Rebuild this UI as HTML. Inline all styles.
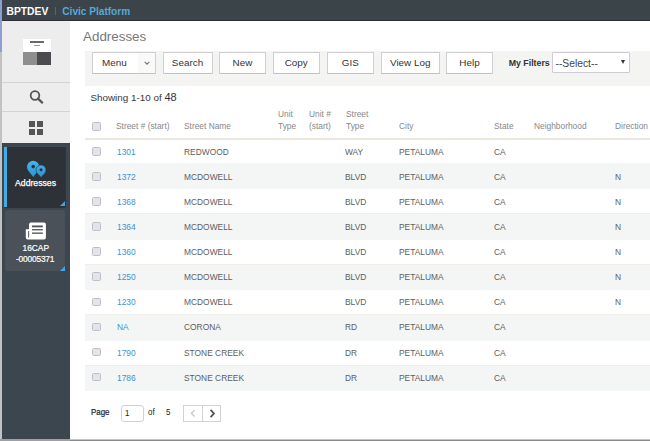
<!DOCTYPE html>
<html><head><meta charset="utf-8">
<style>
*{margin:0;padding:0;box-sizing:border-box}
html,body{width:650px;height:441px;overflow:hidden;background:#fff;font-family:"Liberation Sans",sans-serif;position:relative}
.a{position:absolute;white-space:nowrap}
#lstrip1{left:0;top:0;width:2px;height:52px;background:#8e9dd2}
#lstrip2{left:0;top:52px;width:2px;height:389px;background:#c2c2c2}
#hdr{left:2px;top:0;width:648px;height:21px;background:#3b4549;border-bottom:1px solid #283036}
#hdr .t{font-size:10.3px;font-weight:bold;line-height:10px;top:7px}
#side1{left:2px;top:21px;width:68px;height:122px;background:#ededed}
#side2{left:2px;top:143px;width:68px;height:298px;background:#3b464f}
.sep{left:2px;width:68px;height:1px;background:#d3d3d3}
.btn{top:52px;height:22px;border:1px solid #d0cdd3;border-bottom-color:#c4c0c8;background:#fff;font-size:9.9px;color:#333;text-align:center;line-height:20px}
#toolbar{left:85px;top:51px;width:565px;height:35px;background:#f4f4f3}
.hd{font-size:9px;color:#888;line-height:12px;transform:scaleX(.93);transform-origin:0 0}
.cell{font-size:9.6px;color:#5e5e5e;line-height:10px;transform:scaleX(.875);transform-origin:0 0}
.lnk{color:#3d93d0}
.pg{font-size:9px;color:#222;line-height:10px;transform:scaleX(.88);transform-origin:0 0}
.stripe{left:85px;width:565px;height:25px;background:#f4f5f5}
.cb{width:8.5px;height:8.5px;border:1px solid #c2bec8;background:#e4e3e9;border-radius:1.5px}
</style></head><body>
<div class="a" id="lstrip1"></div>
<div class="a" id="lstrip2"></div>
<div class="a" id="hdr">
  <div class="a t" style="left:4.5px;color:#fff">BPTDEV</div>
  <div class="a" style="left:53px;top:7px;width:1px;height:8px;background:#5b646c"></div>
  <div class="a t" style="left:60.3px;color:#5aa7d6;font-size:10.1px">Civic Platform</div>
</div>
<div class="a" id="side1"></div>
<div class="a sep" style="top:82px"></div>
<div class="a sep" style="top:111px"></div>
<div class="a" id="side2"></div>
<!-- logo icon -->
<div class="a" style="left:23.2px;top:38.5px;width:27.4px;height:13.3px;background:#fff"></div>
<div class="a" style="left:29.6px;top:41px;width:14.3px;height:1.7px;background:#6a6a6a"></div>
<div class="a" style="left:33.5px;top:44.9px;width:6.9px;height:1px;background:#9a9a9a"></div>
<div class="a" style="left:23.2px;top:51.8px;width:13.8px;height:13.4px;background:#8e8e8e"></div>
<div class="a" style="left:37px;top:51.8px;width:13.6px;height:13.4px;background:#4c4b50"></div>
<!-- search icon -->
<svg class="a" style="left:27px;top:88.3px" width="18" height="18" viewBox="0 0 18 18"><circle cx="8" cy="7.5" r="4.3" fill="none" stroke="#555" stroke-width="1.8"/><line x1="11" y1="10.6" x2="15.2" y2="14.6" stroke="#555" stroke-width="2.2" stroke-linecap="round"/></svg>
<!-- grid icon -->
<div class="a" style="left:29.3px;top:121px;width:6px;height:6px;background:#555"></div>
<div class="a" style="left:37.3px;top:121px;width:6px;height:6px;background:#555"></div>
<div class="a" style="left:29.3px;top:128.8px;width:6px;height:6px;background:#555"></div>
<div class="a" style="left:37.3px;top:128.8px;width:6px;height:6px;background:#555"></div>
<!-- addresses tile -->
<div class="a" style="left:3.6px;top:145.8px;width:62px;height:62px;background:#2c3237;border-radius:2px;border-top:1px solid #434b52"></div>
<div class="a" style="left:4.2px;top:146.9px;width:2.7px;height:60px;background:#45aae6"></div>
<svg class="a" style="left:0;top:0" width="70" height="200" viewBox="0 0 70 200"><defs><linearGradient id="pg1" x1="0" y1="160" x2="0" y2="177" gradientUnits="userSpaceOnUse"><stop offset="0" stop-color="#4db5ec"/><stop offset="1" stop-color="#2b93d4"/></linearGradient></defs><path d="M33.2 177L28.33 170.84A6.2 6.2 0 1 1 38.07 170.84Z" fill="url(#pg1)"/><circle cx="33.2" cy="166.6" r="1.8" fill="#2c3237"/><path d="M41 177.4L37.31 173.38A5 5 0 1 1 44.69 173.38Z" fill="url(#pg1)" stroke="#2c3237" stroke-width="0.6"/><circle cx="41" cy="169.8" r="1.5" fill="#2c3237"/></svg>
<div class="a" style="left:15px;top:178.7px;font-size:8.7px;color:#fff;line-height:9px;-webkit-text-stroke:0.25px #fff">Addresses</div>
<div class="a" style="left:59.5px;top:201px;width:0;height:0;border-left:5px solid transparent;border-bottom:5px solid #3ea6e3"></div>
<!-- 16CAP tile -->
<div class="a" style="left:5px;top:210px;width:60px;height:61px;background:#4b5158;border-radius:2px"></div>
<svg class="a" style="left:0;top:200px" width="70" height="60" viewBox="0 200 70 60"><path d="M31 222.4H44A1.9 1.9 0 0 1 45.9 224.3V237.5A1.9 1.9 0 0 1 44 239.4H27.7A1.9 1.9 0 0 1 25.8 237.5V229.2H29V224.4A2 2 0 0 1 31 222.4Z" fill="#fff"/><rect x="32" y="225.5" width="10.8" height="1.8" fill="#4b5158"/><rect x="32" y="229.1" width="10.8" height="1.3" fill="#4b5158"/><rect x="32" y="232.5" width="10.8" height="1.3" fill="#4b5158"/><rect x="28.2" y="231" width="0.9" height="6.5" fill="#4b5158"/></svg>
<div class="a" style="left:22.5px;top:244px;font-size:8.4px;color:#fff;line-height:9px;-webkit-text-stroke:0.2px #fff">16CAP</div>
<div class="a" style="left:16px;top:255.3px;font-size:8.4px;color:#fff;line-height:9px;letter-spacing:-0.2px;-webkit-text-stroke:0.2px #fff">-00005371</div>
<div class="a" style="left:59.5px;top:265.5px;width:0;height:0;border-left:5px solid transparent;border-bottom:5px solid #3ea6e3"></div>

<!-- content -->
<div class="a" style="left:83px;top:29px;font-size:13.4px;color:#777;line-height:15px">Addresses</div>
<div class="a" id="toolbar"></div>
<div class="a btn" style="left:92px;width:64px;text-align:left;padding-left:9px"><div class="a" style="left:44.5px;top:0;width:17.5px;height:20px;background:#f9f9f9"></div><span class="a" style="left:9px;top:0">Menu</span><svg class="a" style="left:50px;top:7px" width="8" height="6" viewBox="0 0 8 6"><path d="M1.7 1.8L4 4.1L6.3 1.8" fill="none" stroke="#777" stroke-width="1.2"/></svg></div>
<div class="a btn" style="left:162.5px;width:50px">Search</div>
<div class="a btn" style="left:219px;width:47px">New</div>
<div class="a btn" style="left:273px;width:46.5px">Copy</div>
<div class="a btn" style="left:327px;width:46.5px">GIS</div>
<div class="a btn" style="left:381px;width:58.5px">View Log</div>
<div class="a btn" style="left:446px;width:47px">Help</div>
<div class="a" style="left:508.7px;top:57.9px;font-size:8.8px;font-weight:bold;color:#333;line-height:10px">My Filters</div>
<div class="a" style="left:552px;top:52px;width:78px;height:21px;border:1px solid #cfcad3;background:#fff;border-radius:1px"></div>
<div class="a" style="left:555.5px;top:58px;font-size:10.3px;color:#444;line-height:11px">--Select--</div>
<div class="a" style="left:621px;top:60px;width:0;height:0;border-left:2.5px solid transparent;border-right:2.5px solid transparent;border-top:4px solid #333"></div>

<div class="a" style="left:90.5px;top:92px;font-size:9.85px;color:#383838;line-height:11px">Showing 1-10 of <span style="font-size:11px;color:#333">48</span></div>

<!-- header -->
<div class="a cb" style="left:92px;top:122px"></div>
<div class="a hd" style="left:116px;top:120px">Street # (start)</div>
<div class="a hd" style="left:183.5px;top:120px">Street Name</div>
<div class="a hd" style="left:278px;top:108px">Unit<br>Type</div>
<div class="a hd" style="left:309px;top:108px">Unit #<br>(start)</div>
<div class="a hd" style="left:345.5px;top:108px">Street<br>Type</div>
<div class="a hd" style="left:399px;top:120px">City</div>
<div class="a hd" style="left:493.5px;top:120px">State</div>
<div class="a hd" style="left:534px;top:120px">Neighborhood</div>
<div class="a hd" style="left:615px;top:120px">Direction</div>
<div class="a" style="left:85px;top:138px;width:565px;height:1.6px;background:#e9e7de"></div>

<div id="rows"><div class="a cb" style="left:92px;top:147.00px"></div>
<div class="a cell lnk" style="left:116.5px;top:146.80px">1301</div>
<div class="a cell" style="left:183.5px;top:146.80px">REDWOOD</div>
<div class="a cell" style="left:345px;top:146.80px">WAY</div>
<div class="a cell" style="left:399px;top:146.80px">PETALUMA</div>
<div class="a cell" style="left:493.5px;top:146.80px">CA</div>
<div class="a stripe" style="top:162.80px;height:26.7px"></div>
<div class="a cb" style="left:92px;top:172.00px"></div>
<div class="a cell lnk" style="left:116.5px;top:171.80px">1372</div>
<div class="a cell" style="left:183.5px;top:171.80px">MCDOWELL</div>
<div class="a cell" style="left:345px;top:171.80px">BLVD</div>
<div class="a cell" style="left:399px;top:171.80px">PETALUMA</div>
<div class="a cell" style="left:493.5px;top:171.80px">CA</div>
<div class="a cell" style="left:615px;top:171.80px">N</div>
<div class="a cb" style="left:92px;top:197.20px"></div>
<div class="a cell lnk" style="left:116.5px;top:197.00px">1368</div>
<div class="a cell" style="left:183.5px;top:197.00px">MCDOWELL</div>
<div class="a cell" style="left:345px;top:197.00px">BLVD</div>
<div class="a cell" style="left:399px;top:197.00px">PETALUMA</div>
<div class="a cell" style="left:493.5px;top:197.00px">CA</div>
<div class="a cell" style="left:615px;top:197.00px">N</div>
<div class="a stripe" style="top:213.28px;height:26.7px"></div>
<div class="a" style="left:85px;width:565px;top:213.28px;height:1px;background:#efeee8"></div>
<div class="a cb" style="left:92px;top:222.20px"></div>
<div class="a cell lnk" style="left:116.5px;top:222.00px">1364</div>
<div class="a cell" style="left:183.5px;top:222.00px">MCDOWELL</div>
<div class="a cell" style="left:345px;top:222.00px">BLVD</div>
<div class="a cell" style="left:399px;top:222.00px">PETALUMA</div>
<div class="a cell" style="left:493.5px;top:222.00px">CA</div>
<div class="a cell" style="left:615px;top:222.00px">N</div>
<div class="a cb" style="left:92px;top:247.40px"></div>
<div class="a cell lnk" style="left:116.5px;top:247.20px">1360</div>
<div class="a cell" style="left:183.5px;top:247.20px">MCDOWELL</div>
<div class="a cell" style="left:345px;top:247.20px">BLVD</div>
<div class="a cell" style="left:399px;top:247.20px">PETALUMA</div>
<div class="a cell" style="left:493.5px;top:247.20px">CA</div>
<div class="a cell" style="left:615px;top:247.20px">N</div>
<div class="a stripe" style="top:263.76px;height:26.7px"></div>
<div class="a" style="left:85px;width:565px;top:263.76px;height:1px;background:#efeee8"></div>
<div class="a cb" style="left:92px;top:272.40px"></div>
<div class="a cell lnk" style="left:116.5px;top:272.20px">1250</div>
<div class="a cell" style="left:183.5px;top:272.20px">MCDOWELL</div>
<div class="a cell" style="left:345px;top:272.20px">BLVD</div>
<div class="a cell" style="left:399px;top:272.20px">PETALUMA</div>
<div class="a cell" style="left:493.5px;top:272.20px">CA</div>
<div class="a cell" style="left:615px;top:272.20px">N</div>
<div class="a cb" style="left:92px;top:297.60px"></div>
<div class="a cell lnk" style="left:116.5px;top:297.40px">1230</div>
<div class="a cell" style="left:183.5px;top:297.40px">MCDOWELL</div>
<div class="a cell" style="left:345px;top:297.40px">BLVD</div>
<div class="a cell" style="left:399px;top:297.40px">PETALUMA</div>
<div class="a cell" style="left:493.5px;top:297.40px">CA</div>
<div class="a cell" style="left:615px;top:297.40px">N</div>
<div class="a stripe" style="top:314.24px;height:26.7px"></div>
<div class="a" style="left:85px;width:565px;top:314.24px;height:1px;background:#efeee8"></div>
<div class="a cb" style="left:92px;top:322.60px"></div>
<div class="a cell lnk" style="left:116.5px;top:322.40px">NA</div>
<div class="a cell" style="left:183.5px;top:322.40px">CORONA</div>
<div class="a cell" style="left:345px;top:322.40px">RD</div>
<div class="a cell" style="left:399px;top:322.40px">PETALUMA</div>
<div class="a cell" style="left:493.5px;top:322.40px">CA</div>
<div class="a cb" style="left:92px;top:347.80px"></div>
<div class="a cell lnk" style="left:116.5px;top:347.60px">1790</div>
<div class="a cell" style="left:183.5px;top:347.60px">STONE CREEK</div>
<div class="a cell" style="left:345px;top:347.60px">DR</div>
<div class="a cell" style="left:399px;top:347.60px">PETALUMA</div>
<div class="a cell" style="left:493.5px;top:347.60px">CA</div>
<div class="a stripe" style="top:364.72px;height:26.7px"></div>
<div class="a" style="left:85px;width:565px;top:364.72px;height:1px;background:#efeee8"></div>
<div class="a cb" style="left:92px;top:372.80px"></div>
<div class="a cell lnk" style="left:116.5px;top:372.60px">1786</div>
<div class="a cell" style="left:183.5px;top:372.60px">STONE CREEK</div>
<div class="a cell" style="left:345px;top:372.60px">DR</div>
<div class="a cell" style="left:399px;top:372.60px">PETALUMA</div>
<div class="a cell" style="left:493.5px;top:372.60px">CA</div></div><!--/rows-->

<!-- pagination -->
<div class="a pg" style="left:91.3px;top:407px;-webkit-text-stroke:0.2px #222">Page</div>
<div class="a" style="left:121.3px;top:405.2px;width:23px;height:17.3px;border:1px solid #d2ced6;border-radius:3px"></div>
<div class="a pg" style="left:125.3px;top:408px">1</div>
<div class="a pg" style="left:148.3px;top:407px">of</div>
<div class="a pg" style="left:165.5px;top:407px">5</div>
<svg class="a" style="left:0;top:0" width="650" height="441" viewBox="0 0 650 441"><rect x="183.5" y="405.5" width="37" height="16" fill="none" stroke="#d4d0d8" stroke-width="1"/><line x1="202.5" y1="405.5" x2="202.5" y2="421.5" stroke="#d4d0d8" stroke-width="1"/><path d="M194.5 410.2L191.4 413.3L194.5 416.5" fill="none" stroke="#c8c8c8" stroke-width="1.3"/><path d="M210.6 409.9L213.9 413.5L210.6 417.1" fill="none" stroke="#505050" stroke-width="1.8"/></svg>
<div class="a" style="left:0;top:439.3px;width:70px;height:1.7px;background:#a0a0a0"></div>
<div class="a" style="left:70px;top:439.3px;width:580px;height:0.8px;background:#c8c4c8"></div>
<div class="a" style="left:70px;top:440px;width:580px;height:1px;background:#8a8a8a"></div>
</body></html>
